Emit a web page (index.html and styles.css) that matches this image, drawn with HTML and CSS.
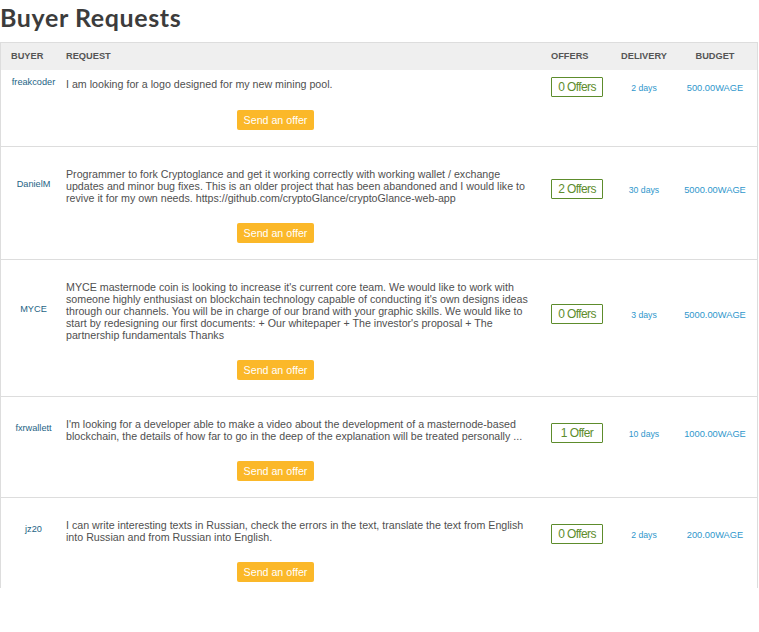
FILE: index.html
```html
<!DOCTYPE html>
<html lang="en">
<head>
  <meta charset="UTF-8" />
  <meta name="viewport" content="width=device-width, initial-scale=1.0"/>
  <title>Buyer Requests</title>
  <link rel="stylesheet" href="styles.css">
</head>
<body>

  <h1 class="page-title">Buyer Requests</h1>

  <div class="requests">
    <div class="requests-head">
      <div class="col-buyer">Buyer</div>
      <div class="col-request">Request</div>
      <div class="col-offers">Offers</div>
      <div class="col-delivery">Delivery</div>
      <div class="col-budget">Budget</div>
    </div>

    <div class="request-row first">
      <a href="#" class="buyer">freakcoder</a>
      <p class="request-text">I am looking for a logo designed for my new mining pool.</p>
      <div class="offers"><span class="offers-badge">0 Offers</span></div>
      <div class="delivery">2 days</div>
      <div class="budget">500.00WAGE</div>
      <div class="send-wrap"><a href="#" class="send-btn">Send an offer</a></div>
    </div>

    <div class="request-row">
      <a href="#" class="buyer">DanielM</a>
      <p class="request-text">Programmer to fork Cryptoglance and get it working correctly with working wallet / exchange updates and minor bug fixes. This is an older project that has been abandoned and I would like to revive it for my own needs. https://github.com/cryptoGlance/cryptoGlance-web-app</p>
      <div class="offers"><span class="offers-badge">2 Offers</span></div>
      <div class="delivery">30 days</div>
      <div class="budget">5000.00WAGE</div>
      <div class="send-wrap"><a href="#" class="send-btn">Send an offer</a></div>
    </div>

    <div class="request-row">
      <a href="#" class="buyer">MYCE</a>
      <p class="request-text">MYCE masternode coin is looking to increase it's current core team. We would like to work with someone highly enthusiast on blockchain technology capable of conducting it's own designs ideas through our channels. You will be in charge of our brand with your graphic skills. We would like to start by redesigning our first documents: + Our whitepaper + The investor's proposal + The partnership fundamentals Thanks</p>
      <div class="offers"><span class="offers-badge">0 Offers</span></div>
      <div class="delivery">3 days</div>
      <div class="budget">5000.00WAGE</div>
      <div class="send-wrap"><a href="#" class="send-btn">Send an offer</a></div>
    </div>

    <div class="request-row">
      <a href="#" class="buyer">fxrwallett</a>
      <p class="request-text">I'm looking for a developer able to make a video about the development of a masternode-based blockchain, the details of how far to go in the deep of the explanation will be treated personally ...</p>
      <div class="offers"><span class="offers-badge">1 Offer</span></div>
      <div class="delivery">10 days</div>
      <div class="budget">1000.00WAGE</div>
      <div class="send-wrap"><a href="#" class="send-btn">Send an offer</a></div>
    </div>

    <div class="request-row">
      <a href="#" class="buyer">jz20</a>
      <p class="request-text">I can write interesting texts in Russian, check the errors in the text, translate the text from English into Russian and from Russian into English.</p>
      <div class="offers"><span class="offers-badge">0 Offers</span></div>
      <div class="delivery">2 days</div>
      <div class="budget">200.00WAGE</div>
      <div class="send-wrap"><a href="#" class="send-btn">Send an offer</a></div>
    </div>
  </div>

</body>
</html>
```

FILE: styles.css
```css
* {
  margin: 0;
  padding: 0;
  box-sizing: border-box;
}

body {
  background-color: #fff;
  color: #555;
  font-family: 'Liberation Sans', Arial, sans-serif;
}

a {
  text-decoration: none;
}

.page-title {
  font-family: Lato, 'Open Sans', sans-serif;
  font-size: 25px;
  font-weight: bold;
  letter-spacing: 0.6px;
  color: #3c3c3c;
  line-height: 29px;
  margin-top: 3px;
  margin-bottom: 10px;
}

.requests {
  width: 758px;
  height: 546px;
  overflow: hidden;
  border: 1px solid #ddd;
  border-bottom: 0;
}

.requests-head,
.request-row {
  display: grid;
  grid-template-columns: 65px 485px 60px 66px 76px 1fr;
}

.requests-head {
  background-color: #efefef;
  padding: 7px 0 8px;
  font-size: 9.25px;
  font-weight: bold;
  line-height: 12px;
  text-transform: uppercase;
  color: #555;
}

.requests-head .col-buyer {
  padding-left: 10px;
}

.requests-head .col-delivery,
.requests-head .col-budget {
  text-align: center;
}

.request-row {
  align-items: center;
  padding: 21px 0 16px;
  border-bottom: 1px solid #ddd;
}

.request-row.first {
  padding-top: 8px;
}

.buyer {
  text-align: center;
  font-size: 9.2px;
  line-height: 12px;
  color: #1e6485;
  margin: -2px 0 2px;
}

.request-text {
  font-size: 10.66px;
  line-height: 12px;
  color: #505050;
  padding-right: 15px;
}

.offers-badge {
  display: block;
  width: 52px;
  height: 20px;
  margin: -4px 0 -10px;
  border: 1px solid #5d8c2c;
  border-radius: 1px;
  text-align: center;
  font-size: 12px;
  line-height: 18px;
  letter-spacing: -0.6px;
  color: #5d8c2c;
}

.delivery,
.budget {
  text-align: center;
  line-height: 12px;
  color: #2f97cc;
  margin: 4px 0 -4px;
}

.delivery {
  font-size: 8.7px;
}

.budget {
  font-size: 9.3px;
}

.send-wrap {
  grid-column: 2;
  margin-top: 19px;
}

.first .send-wrap {
  margin-top: 20px;
}

.send-btn {
  display: block;
  width: 77px;
  height: 20px;
  margin-left: 171px;
  background-color: #fbb829;
  border-radius: 2px;
  text-align: center;
  font-size: 10.66px;
  line-height: 20px;
  color: #fff;
}
```
